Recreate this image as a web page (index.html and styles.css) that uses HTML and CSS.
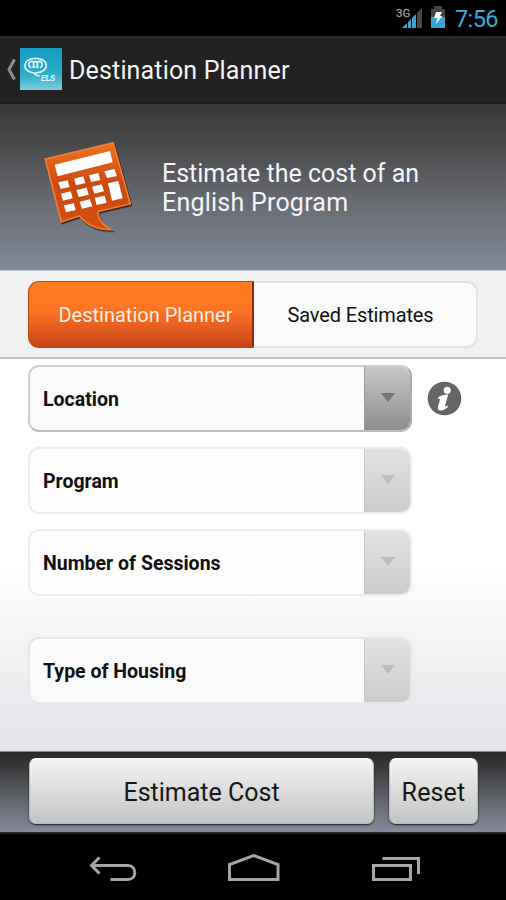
FILE: index.html
```html
<!DOCTYPE html>
<html lang="en">
<head>
<meta charset="utf-8">
<title>Destination Planner</title>
<link rel="stylesheet" href="styles.css">
</head>
<body>
<div class="screen">
  <div class="status">
    <svg class="status-icons" width="60" height="36" viewBox="0 0 60 36">
      <defs><clipPath id="bars"><path d="M2 28 22 8V28Z"/></clipPath></defs>
      <g clip-path="url(#bars)"><path fill="#3aa3cf" d="M2 8h5v20H2zM8 8h3v20H8zM12 8h4v20h-4z"/><path fill="#484848" d="M17 8h5v20h-5z"/></g>
      <text x="-4" y="17" class="network">3G</text>
      <path fill="#444" d="M34 6h8v3h3v19H31V9h3z"/>
      <path fill="#39a5d2" d="M31 17h14v11H31z"/>
      <path fill="#fff" d="M36 12h6l-2 4h2.500l-6.500 8 1.500-6H34z"/>
    </svg>
    <span class="clock">7:56</span>
  </div>
  <header class="bar">
    <svg class="back" width="20" height="66" viewBox="0 0 20 66"><path d="M14.500 22.500 9 32.500l5.500 10" fill="none" stroke="#8d8d8d" stroke-width="3"/></svg>
    <svg class="logo" width="42" height="42" viewBox="0 0 126 126">
      <defs><linearGradient id="logo" x2="0" y2="1"><stop offset="0" stop-color="#139cc2"/><stop offset=".65" stop-color="#31aec9"/><stop offset="1" stop-color="#82cddd"/></linearGradient></defs>
      <path fill="url(#logo)" d="M0 0h126v126H0z"/>
      <g fill="none" stroke="#d9f5fa" stroke-width="5"><path d="M44 75C4 72 5 32 45 31c43-1 44 39 8 43-12 2-12 7 6 10"/><path d="M34 59c-11-4-9-18 1-19 8-1 8 17 2 19M45 59c-6-4-6-18 1-19 8 1 8 15 2 19M55 59c-5-3-5-18 3-19 11 1 11 15 2 19"/></g>
      <text x="62" y="99" class="logo-text" textLength="44">ELS</text>
    </svg>
    <h1 class="title">Destination Planner</h1>
  </header>
  <section class="hero">
    <svg class="calc" width="120" height="110" viewBox="0 0 360 330">
      <defs><linearGradient id="orange" x2="0" y2="1"><stop offset="0" stop-color="#ef7622"/><stop offset=".45" stop-color="#cc4a12"/><stop offset="1" stop-color="#d34d10"/></linearGradient></defs>
      <path class="calc-body" d="M46 87 250 38 301 222 205 244C203 266 218 285 243 299 206 300 172 286 148 258L94 276Z" fill="url(#orange)"/>
      <g fill="#fff"><path d="m74 104 166-41 8 34-165 42zM85 157l28-6 6 20-27 6zM132 146l28-7 6 21-28 6zM177 136l28-7 6 21-28 6zM223 124l30-7 8 21-30 6zM93 191l29-7 6 21-29 7zM139 180l31-7 6 21-30 7zM186 170l29-7 7 21-29 7zM234 160l31-7 13 52-32 7zM102 226l29-6 6 20-29 7zM149 215l31-7 7 21-31 7zM194 203l30-6 6 21-30 7z"/></g>
    </svg>
    <p class="lead"><span class="lead-a">Estimate the cost of an</span><br><span class="lead-b">English Program</span></p>
  </section>
  <nav class="tabs">
    <div class="tab active">Destination Planner</div>
    <div class="tab saved">Saved Estimates</div>
  </nav>
  <main class="form">
    <div class="row">
      <div class="select enabled"><span class="label">Location</span><span class="drop"><i class="arrow"></i></span></div>
      <svg class="info" width="35" height="35" viewBox="0 0 35 35"><circle cx="17.500" cy="17.500" r="16.800" fill="#656565"/><circle cx="20.200" cy="9.200" r="3.500" fill="#fff"/><path d="M11.500 16c2.800-1.900 6-2.700 9.700-2.600l-3.200 11.400c-.2 1 .9.700 2.300-.4l.6 1.500c-3 2.700-5.700 3.900-7.900 3.500-2.300-.4-2.500-2.100-1.900-4.200l2.100-7.400-2.100.5z" fill="#fff"/></svg>
    </div>
    <div class="select"><span class="label">Program</span><span class="drop"><i class="arrow"></i></span></div>
    <div class="select"><span class="label">Number of Sessions</span><span class="drop"><i class="arrow"></i></span></div>
    <div class="select housing"><span class="label">Type of Housing</span><span class="drop"><i class="arrow"></i></span></div>
  </main>
  <footer class="actions">
    <button class="button estimate">Estimate Cost</button>
    <button class="button reset">Reset</button>
  </footer>
  <div class="system">
    <svg width="506" height="66" viewBox="0 0 506 66" fill="none" stroke="#a5a5a5" stroke-width="3">
      <path d="M99.500 23.500 91.500 31.500 99.500 39.500M92 31.500h36c9 0 9 14 0 14h-17.500"/>
      <path d="M229.500 45.500v-15l24-9 24.500 9v15z"/>
      <path d="M373.500 31.500h37v14h-37zM382.500 24.500h36v15.500"/>
    </svg>
  </div>
</div>
</body>
</html>
```

FILE: styles.css
```css
* { box-sizing: border-box; }
body { margin: 0; font-family: Roboto, "Liberation Sans", sans-serif; background: #000; }
.screen { width: 506px; height: 900px; display: flex; flex-direction: column; overflow: hidden; }
.status { height: 36px; display: flex; justify-content: flex-end; padding-right: 8px; background: #000; }
.status-icons { overflow: visible; margin-right: -5px; }
.network { font-size: 11.500px; fill: #999; stroke: #999; stroke-width: .3px; }
.clock { width: 43px; color: #36addc; font-size: 23.500px; line-height: 38px; letter-spacing: -.6px; white-space: nowrap; }
.bar { height: 68px; display: flex; align-items: center; background: #222; border-top: 2px solid #2b2b2b; border-bottom: 2px solid #1c1c1c; }
.back, .logo { flex: none; }
.logo { margin-bottom: 2px; }
.logo-text { font: italic 700 25px "Liberation Sans", sans-serif; fill: #def8fb; }
.title { margin: 2px 0 0 7px; color: #f4f4f4; font-size: 25px; font-weight: 400; line-height: 36px; letter-spacing: .16px; white-space: nowrap; }
.hero { height: 166px; display: flex; padding-left: 30px; background: linear-gradient(#383838 0, #4a4a4b 25%, #696c72 60%, #81889a 100%); }
.calc { margin-top: 26px; flex: none; }
.calc-body { stroke: #ef7f32; stroke-width: 5; filter: drop-shadow(3px 4px 2px #222); }
.lead { margin: 55px 0 0 12px; font-size: 25px; line-height: 29px; color: #f3f5fa; white-space: nowrap; }
.lead-b { letter-spacing: .23px; }
.tabs { height: 89px; display: flex; padding: 10px 28px 10px; background: #f1f1f2; border-top: 1px solid #c6c8ce; border-bottom: 2px solid #c1c1c4; }
.tab { height: 67px; flex: 1; display: flex; align-items: center; justify-content: center; border: 2px solid #e2e2e2; border-left: 0; border-radius: 0 11px 11px 0; background: #fafafa; color: #111; font-size: 20px; line-height: 30px; white-space: nowrap; padding: 1px 9px 0 0; }
.saved { letter-spacing: -.13px; }
.tab.active { flex: 0 0 226px; padding: 1px 0 0 10px; color: #ffede0; background: linear-gradient(#ff7e1d, #fc7425 45%, #c94217); border: 1px solid #b64a15; border-right: 2px solid #992809; border-radius: 11px 0 0 11px; }
.form { height: 392px; padding: 6px 0 0 28px; background: linear-gradient(#fff 0, #fff 51%, #e3e4e8 100%); }
.row { display: flex; align-items: center; }
.select { width: 384px; height: 67px; display: flex; margin-bottom: 15px; border: 2px solid #ededee; border-radius: 11px; background: rgba(252,252,252,.8); overflow: hidden; }
.select.enabled { border-color: #d0d0d0 #aaa #bdbdbd #cfcfcf; background: #fafafa; }
.label { flex: 1; padding-left: 13px; font-size: 19.500px; font-weight: 700; line-height: 66px; color: #111; white-space: nowrap; }
.drop { width: 48px; margin: -2px -2px -2px 0; display: flex; align-items: center; justify-content: center; background: linear-gradient(#e3e3e3, #cbcbcb); border-left: 1px solid #c8c8c8; }
.enabled .drop { background: linear-gradient(#c9c9c9, #898a8c); border-left-color: #999; }
.arrow { border: 7px solid transparent; border-top: 9px solid #bdbdbd; border-bottom: 0; margin: 0 1px 3px 0; }
.enabled .arrow { border-top-color: #737577; }
.info { margin: -15px 0 0 15px; }
.housing { margin-top: 41px; border-color: #e6e7e9; }
.actions { height: 83px; display: flex; gap: 15px; padding: 6px 27px 8px 29px; background: linear-gradient(#292929 0, #3b3b3c 20%, #646770 60%, #858a9a 97%, #222531 98%); border-top: 1px solid #888; }
.button { height: 66px; padding: 2px 0 0; border: 1px solid #b8b8b8; border-top-color: #fff; border-radius: 7px; background: linear-gradient(#f4f4f4, #dedede 45%, #c2c3c4); color: #171717; font: 25px Roboto, sans-serif; box-shadow: 0 1px 2px #15171d; white-space: nowrap; }
.estimate { width: 345px; }
.reset { width: 89px; letter-spacing: .15px; }
.system { height: 66px; background: #000; }
```
